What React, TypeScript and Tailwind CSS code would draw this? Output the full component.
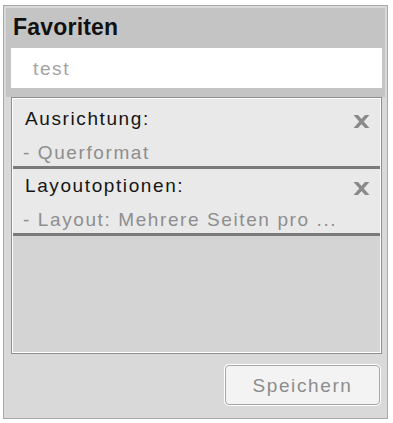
const items = [
  { title: "Ausrichtung:", value: "- Querformat" },
  { title: "Layoutoptionen:", value: "- Layout: Mehrere Seiten pro ..." },
];

function CloseX() {
  return (
    <svg width="17" height="13" viewBox="0 0 17 13" className="mt-[6px] shrink-0">
      <path d="M1 -2 L16 15 M16 -2 L1 15" stroke="#8a8a8a" strokeWidth="3.4" fill="none" />
    </svg>
  );
}

export default function App() {
  return (
    <div className="h-[423px] w-[393px] bg-white pb-[4px] pl-[3px] pr-[5px] pt-[5px] font-['Liberation_Sans',Arial,sans-serif] text-[19px] tracking-[1.6px]">
      <div className="flex h-full flex-col border border-[#a9a9a9] bg-[#d9d9d9] p-[2px]">
        <div className="bg-[#c4c4c4] pb-[9px] pl-[5px] pr-[3px]">
          <div className="h-[40px] pl-[2px] pt-[8px] text-[23px] font-bold leading-none tracking-[0.2px] text-[#111]">
            Favoriten
          </div>
          <div className="flex h-[40px] items-center bg-white pl-[22px] leading-none text-[#a3a3a3]">test</div>
        </div>

        <div className="ml-[5px] mr-[3px] h-[257px] border border-[#8e8e8e]">
          <div className="flex h-full flex-col border border-white bg-[#d4d4d4]">
            {items.map((it, i) => (
              <div
                key={it.title}
                className={`border-b-[3px] border-[#7a7a7a] bg-[#e9e9e9] pb-[4px] pl-[12px] pr-[10px] ${i === 0 ? "pt-[10px]" : "pt-[7px]"}`}
              >
                <div className="flex items-start justify-between">
                  <span className="leading-none text-[#151515]">{it.title}</span>
                  <CloseX />
                </div>
                <div className="-ml-[2px] mt-[15px] leading-none text-[#8e8e8e]">{it.value}</div>
              </div>
            ))}
          </div>
        </div>

        <div className="flex justify-end pr-[5px] pt-[11px]">
          <button className="h-[40px] w-[155px] rounded-[4px] border border-[#a6a6a6] bg-[#f3f3f3] leading-none text-[#8c8c8c] shadow-[0_0_0_1px_#fff]">
            Speichern
          </button>
        </div>
      </div>
    </div>
  );
}
